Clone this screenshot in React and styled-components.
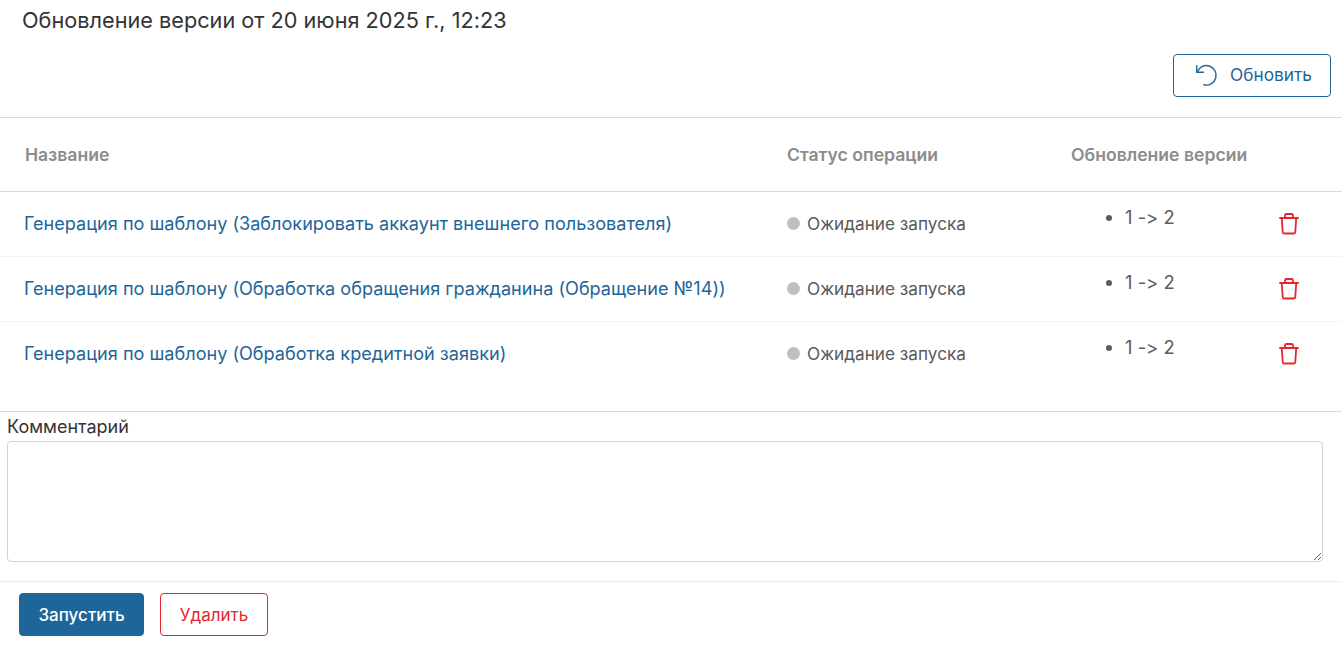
import styled, { createGlobalStyle } from "styled-components";

const Global = createGlobalStyle`
    html, body { margin: 0; padding: 0; background: #fff; }
    body {
        font-family: Inter, "Noto Sans", sans-serif;
        font-variant-ligatures: none;
        font-feature-settings: "calt" 0;
        color: #333;
    }
`;

const Page = styled.div`
    width: 1342px;
    height: 648px;
    overflow: hidden;
    display: flex;
    flex-direction: column;
`;

const Title = styled.h2`
    margin: 0;
    padding: 5px 0 0 22px;
    height: 33px;
    font-size: 21.7px;
    line-height: 30px;
    font-weight: 400;
    color: #333;
`;

const Toolbar = styled.div`
    display: flex;
    justify-content: flex-end;
    padding: 16px 11px 20px 0;
    border-bottom: 1px solid #d9d9d9;
`;

const RefreshButton = styled.button`
    display: flex;
    align-items: center;
    gap: 11px;
    width: 158px;
    height: 43px;
    padding: 0 0 2px 19px;
    background: #fff;
    border: 1px solid #1e6599;
    border-radius: 4px;
    color: #1e6599;
    font: 400 17.3px Inter, sans-serif;
`;

const columns = "787px 284px 1fr 64px";

const HeadRow = styled.div`
    display: grid;
    grid-template-columns: ${columns};
    height: 73px;
    align-items: center;
    border-bottom: 1px solid #d9d9d9;
    font-size: 17.6px;
    font-weight: 600;
    color: #8c8c8c;
    & > :first-child { padding-left: 25px; }
`;

const Rows = styled.div`
    padding-bottom: 24px;
    border-bottom: 1px solid #d9d9d9;
`;

const Row = styled.div`
    display: grid;
    grid-template-columns: ${columns};
    height: 64px;
    align-items: center;
    border-bottom: 1px solid ${(p) => (p.$last ? "transparent" : "#f5f5f5")};
`;

const NameLink = styled.a`
    padding: 0 0 2px 24px;
    font-size: 18.1px;
    color: #1e6599;
    text-decoration: none;
`;

const Status = styled.div`
    display: flex;
    align-items: center;
    gap: 7px;
    padding-bottom: 1px;
    font-size: 17.2px;
    color: #595959;
`;

const Dot = styled.span`
    width: 13px;
    height: 13px;
    border-radius: 50%;
    background: #bfbfbf;
`;

const Versions = styled.ul`
    margin: -14px 0 0;
    padding: 0 0 0 54px;
    font-size: 18.4px;
    line-height: 24px;
    color: #5c5c5c;
`;

const DeleteIcon = styled.button`
    display: flex;
    padding: 0;
    border: 0;
    background: none;
    color: #e5262d;
`;

const CommentBlock = styled.div`
    padding: 3px 19px 19px 7px;
    border-bottom: 1px solid #ececec;
`;

const Label = styled.label`
    display: block;
    font-size: 18px;
    line-height: 24px;
    color: #333;
    margin-bottom: 2px;
`;

const Comment = styled.textarea`
    display: block;
    box-sizing: border-box;
    width: 100%;
    height: 121px;
    border: 1px solid #d4d4d4;
    border-radius: 4px;
    resize: vertical;
`;

const Footer = styled.div`
    display: flex;
    gap: 16px;
    padding: 11px 19px;
`;

const Action = styled.button`
    width: ${(p) => (p.$primary ? 125 : 108)}px;
    height: 43px;
    padding: 0;
    border-radius: 4px;
    font: ${(p) => (p.$primary ? 500 : 400)} 17px Inter, sans-serif;
    background: ${(p) => (p.$primary ? "#1e6599" : "#fff")};
    color: ${(p) => (p.$primary ? "#fff" : "#e5262d")};
    border: 1px solid ${(p) => (p.$primary ? "#1e6599" : "#e5262d")};
`;

function RefreshIcon() {
    return (
        <svg width="26" height="26" viewBox="0 0 24 24" fill="none" stroke="currentColor" strokeWidth="1.3" strokeLinecap="round" strokeLinejoin="round">
            <path d="M3.500 3.500v6h6" />
            <path d="M3.800 9.500A9 9 0 1 1 10 21" />
        </svg>
    );
}

function TrashIcon() {
    return (
        <svg width="22" height="24" viewBox="0 0 22 24" fill="none" stroke="currentColor" strokeWidth="1.8" strokeLinecap="round" strokeLinejoin="round">
            <path d="M2 6h18" />
            <path d="M3.800 6l.9 14a1.500 1.500 0 0 0 1.500 1.500h9.600a1.500 1.500 0 0 0 1.500-1.500l.9-14" />
            <path d="M7 6V3.500A1.500 1.500 0 0 1 8.500 2h5A1.500 1.500 0 0 1 15 3.500V6" />
        </svg>
    );
}

const items = [
    "Генерация по шаблону (Заблокировать аккаунт внешнего пользователя)",
    "Генерация по шаблону (Обработка обращения гражданина (Обращение №14))",
    "Генерация по шаблону (Обработка кредитной заявки)",
];

export default function App() {
    return (
        <Page>
            <Global />
            <Title>Обновление версии от 20 июня 2025 г., 12:23</Title>
            <Toolbar>
                <RefreshButton><RefreshIcon />Обновить</RefreshButton>
            </Toolbar>
            <HeadRow>
                <div>Название</div>
                <div>Статус операции</div>
                <div>Обновление версии</div>
            </HeadRow>
            <Rows>
                {items.map((name, i) => (
                    <Row key={name} $last={i === items.length - 1}>
                        <NameLink href="#">{name}</NameLink>
                        <Status><Dot />Ожидание запуска</Status>
                        <Versions><li>1 -&gt; 2</li></Versions>
                        <DeleteIcon><TrashIcon /></DeleteIcon>
                    </Row>
                ))}
            </Rows>
            <CommentBlock>
                <Label>Комментарий</Label>
                <Comment />
            </CommentBlock>
            <Footer>
                <Action $primary>Запустить</Action>
                <Action>Удалить</Action>
            </Footer>
        </Page>
    );
}
